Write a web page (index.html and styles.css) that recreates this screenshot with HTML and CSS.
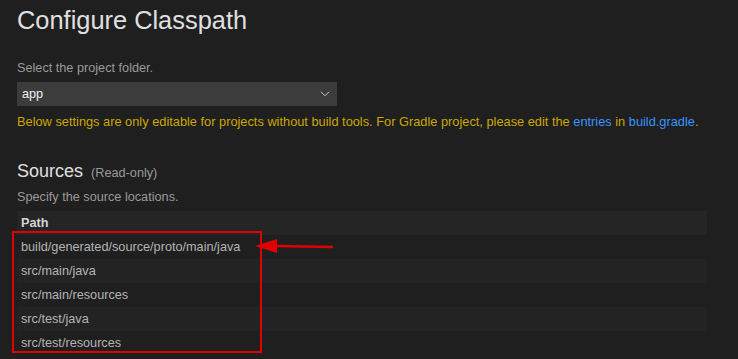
FILE: index.html
```html
<!DOCTYPE html>
<html lang="en">
<head>
    <meta charset="UTF-8">
    <meta name="viewport" content="width=device-width, initial-scale=1.0">
    <title>Configure Classpath</title>
    <link rel="stylesheet" href="styles.css">
</head>
<body>
    <div class="page">
        <h1>Configure Classpath</h1>

        <p class="hint folder-hint">Select the project folder.</p>
        <div class="dropdown">
            <span>app</span>
            <svg width="10" height="6" viewBox="0 0 10 6"><path d="M1 0.8 L5 4.8 L9 0.8" fill="none" stroke="#c5c5c5" stroke-width="1"/></svg>
        </div>
        <p class="warning">Below settings are only editable for projects without build tools. For Gradle project, please edit the <a href="#">entries</a> in <a href="#">build.gradle</a>.</p>

        <h2>Sources <span class="note">(Read-only)</span></h2>
        <p class="hint">Specify the source locations.</p>

        <div class="table">
            <div class="row head">Path</div>
            <div class="row">build/generated/source/proto/main/java</div>
            <div class="row alt">src/main/java</div>
            <div class="row">src/main/resources</div>
            <div class="row alt">src/test/java</div>
            <div class="row">src/test/resources</div>

            <!-- annotation drawn over the screenshot -->
            <div class="mark"></div>
            <svg class="arrow" width="80" height="16" viewBox="0 0 80 16">
                <path d="M20 8 L78 9" stroke="#e00000" stroke-width="2.5"/>
                <polygon points="0,8 22,1 22,15" fill="#e00000"/>
            </svg>
        </div>
    </div>
</body>
</html>
```

FILE: styles.css
```css
/* dark settings page */
body {
    margin: 0;
    padding: 0;
    background-color: #1f1f1f;
    font-family: "Liberation Sans", Arial, sans-serif;
    color: #cccccc;
}

.page {
    padding: 0 17px;
}

h1 {
    margin: 5px 0 0;
    font-size: 25.4px;
    line-height: 30px;
    font-weight: normal;
    color: #e0e0e0;
}

.hint {
    margin: 0;
    font-size: 12.7px;
    line-height: 16px;
    color: #9a9a9a;
}

.folder-hint {
    margin-top: 25px;
}

.dropdown {
    width: 320px;
    height: 24px;
    margin-top: 6px;
    box-sizing: border-box;
    padding: 0 7px 0 5px;
    display: flex;
    align-items: center;
    justify-content: space-between;
    background-color: #3c3c3c;
    color: #f0f0f0;
    font-size: 12.7px;
}

.warning {
    margin: 8px 0 0;
    font-size: 12.8px;
    line-height: 16px;
    color: #cca700;
}

.warning a {
    color: #3794ff;
    text-decoration: none;
}

h2 {
    margin: 30px 0 0;
    font-size: 18px;
    line-height: 22px;
    font-weight: normal;
    color: #e0e0e0;
}

h2 .note {
    margin-left: 3px;
    font-size: 12.7px;
    color: #9a9a9a;
}

h2 + .hint {
    margin-top: 5px;
}

.table {
    position: relative;
    width: 690px;
    margin-top: 6px;
}

.row {
    height: 24px;
    line-height: 24px;
    padding-left: 4px;
    font-size: 12.7px;
    color: #b4b4b4;
}

.row.head {
    background-color: #252525;
    font-weight: bold;
    color: #d4d4d4;
}

.row.alt {
    background-color: #232323;
}

.mark {
    position: absolute;
    left: -5px;
    top: 20px;
    width: 246px;
    height: 118px;
    border: 2px solid #e00000;
}

.arrow {
    position: absolute;
    left: 238px;
    top: 27px;
}
```
